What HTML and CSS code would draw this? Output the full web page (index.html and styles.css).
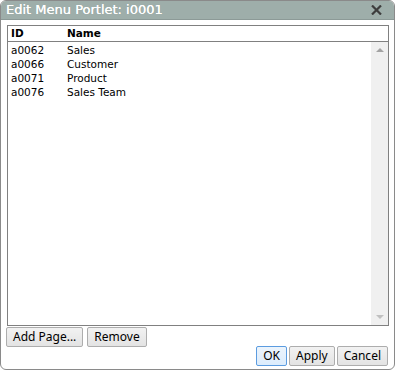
FILE: index.html
```html
<!DOCTYPE html>
<html lang="en">
<head>
    <meta charset="UTF-8">
    <meta name="viewport" content="width=device-width, initial-scale=1.0">
    <title>Edit Menu Portlet</title>
    <link rel="stylesheet" href="styles.css">
</head>
<body>
    <div class="dialog">
        <div class="titlebar">
            <span class="title">Edit Menu Portlet: i0001</span>
            <svg class="close" width="11" height="10" viewBox="0 0 11 10">
                <path d="M1 0.5 L10 9.5 M10 0.5 L1 9.5" stroke="#3d3d3d" stroke-width="2.2"/>
            </svg>
        </div>
        <div class="content">
            <div class="panel">
                <div class="head">
                    <span class="col-id">ID</span>
                    <span class="col-name">Name</span>
                </div>
                <div class="body">
                    <div class="rows">
                        <div class="row"><span class="col-id">a0062</span><span class="col-name">Sales</span></div>
                        <div class="row"><span class="col-id">a0066</span><span class="col-name">Customer</span></div>
                        <div class="row"><span class="col-id">a0071</span><span class="col-name">Product</span></div>
                        <div class="row"><span class="col-id">a0076</span><span class="col-name">Sales Team</span></div>
                    </div>
                    <div class="scrollbar">
                        <span class="arrow up"></span>
                        <span class="arrow down"></span>
                    </div>
                </div>
            </div>
            <div class="actions">
                <button>Add Page...</button>
                <button>Remove</button>
            </div>
            <div class="footer">
                <button class="focused">OK</button>
                <button>Apply</button>
                <button>Cancel</button>
            </div>
        </div>
    </div>
</body>
</html>
```

FILE: styles.css
```css
body {
    margin: 0;
    background: #ffffff;
    font-family: "DejaVu Sans", sans-serif;
}
.dialog {
    width: 395px;
    height: 370px;
    box-sizing: border-box;
    border: 1px solid #8a8a8a;
    border-radius: 6px;
    overflow: hidden;
    display: flex;
    flex-direction: column;
    background: #ffffff;
}
.titlebar {
    height: 18px;
    background: #9eaeaa;
    border-bottom: 1px solid #8c9a97;
    display: flex;
    align-items: center;
    justify-content: space-between;
    padding: 0 12px 0 5px;
}
.title {
    color: #ffffff;
    font-size: 13px;
    line-height: 18px;
    text-shadow: 0 0 0.4px #ffffff;
}
.close {
    display: block;
}
.content {
    flex: 1;
    display: flex;
    flex-direction: column;
    padding: 5px 5px 0 5px;
}
.panel {
    height: 299px;
    margin-left: 1px;
    border: 1px solid #808080;
    display: flex;
    flex-direction: column;
    font-size: 10.5px;
    color: #000000;
}
.head {
    height: 15px;
    line-height: 15px;
    border-bottom: 1px solid #808080;
    font-weight: bold;
    display: flex;
}
.col-id {
    width: 56px;
    padding-left: 3px;
}
.body {
    flex: 1;
    display: flex;
}
.rows {
    flex: 1;
    padding-top: 1px;
}
.row {
    height: 14px;
    line-height: 14px;
    display: flex;
}
.scrollbar {
    width: 17px;
    background: #f0f0f0;
    display: flex;
    flex-direction: column;
    justify-content: space-between;
    align-items: center;
    padding: 6px 0 6px;
}
.arrow {
    width: 0;
    height: 0;
    border-left: 4px solid transparent;
    border-right: 4px solid transparent;
}
.arrow.up {
    border-bottom: 4px solid #a3a3a3;
}
.arrow.down {
    border-top: 4px solid #c0c0c0;
}
button {
    font-family: "Noto Sans", sans-serif;
    font-size: 12px;
    color: #000000;
    height: 20px;
    padding: 0 6px;
    border: 1px solid #adadad;
    border-radius: 2px;
    background: linear-gradient(#f2f2f2, #e3e3e3);
    line-height: 16px;
}
.actions {
    display: flex;
    gap: 4px;
    margin-top: 1px;
}
.footer {
    display: flex;
    justify-content: flex-end;
    gap: 2px;
    margin-top: -1px;
    padding-right: 1px;
}
.footer button.focused {
    border-color: #5c9ce0;
    background: linear-gradient(#ecf4fc, #dcecfc);
}
```
